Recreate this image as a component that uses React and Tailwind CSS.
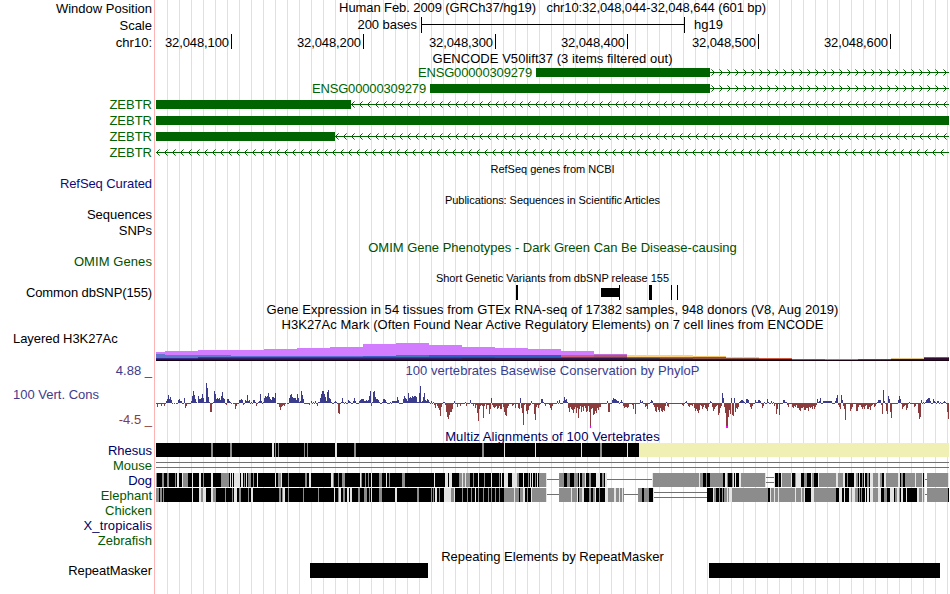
import React from "react";

const GREEN = "#006400";

/* One horizontal strip: right-aligned label on the left, track drawing on the right. */
function Row({ h, label, labelClass = "", children }) {
  return (
    <div className={`flex shrink-0 ${h}`}>
      <div className={`w-[155px] shrink-0 pr-[3px] text-right ${labelClass}`}>{label}</div>
      <div className="flex w-[794px] shrink-0 items-start">{children}</div>
    </div>
  );
}

function Title({ className = "", children }) {
  return <div className={`w-full pl-px text-center whitespace-pre ${className}`}>{children}</div>;
}

/* Intron line with strand arrows every 8 px. */
function Intron({ width, first, dir }) {
  const tips = [];
  for (let x = first; x < width; x += 8) tips.push(x);
  return (
    <svg width={width} height="16" className="block shrink-0" shapeRendering="crispEdges">
      <rect x="0" y="7" width={width} height="1" fill={GREEN} />
      {tips.map((x) => (
        <g key={x} fill={GREEN}>
          <rect x={x + dir} y="6" width="1" height="3" />
          <rect x={x + dir * 2} y="5" width="1" height="1" />
          <rect x={x + dir * 2} y="9" width="1" height="1" />
          <rect x={x + dir * 3} y="4" width="1" height="1" opacity="0.6" />
          <rect x={x + dir * 3} y="10" width="1" height="1" opacity="0.6" />
        </g>
      ))}
    </svg>
  );
}

/* Conservation scores: "position:score"; a score holds up to the next position. */
const PHYLOP = `156:-1 157:-4 158:-1 161:-3 162:-1 164:-3 165:-1 166:2 167:4 168:8 169:4 170:6 171:3 172:-1 173:0 174:-1 175:0 176:-1 178:3 179:4 180:2 181:2 182:-1 184:5 185:-5 186:-3 187:-1 191:2 192:7 193:12 194:8 195:4 196:1 197:0 198:7 199:4 200:4 201:5 202:9 203:5 204:1 206:20 207:15 208:6 209:1 210:-9 212:-1 213:1 214:12 215:9 216:4 217:5 218:4 219:5 220:3 221:7 222:11 223:5 224:4 225:-1 226:-2 227:4 228:4 229:2 230:1 231:-1 232:0 233:-1 235:-6 236:-3 237:-1 239:3 240:3 241:4 242:3 243:-2 244:-1 245:3 246:2 247:8 248:2 249:3 250:-1 251:1 252:-1 253:3 255:1 256:-3 257:-1 258:1 259:2 260:9 261:2 262:-1 263:1 264:5 265:7 266:6 267:7 268:10 269:6 270:4 271:3 272:6 274:5 275:10 276:0 277:-1 279:-4 280:-7 281:-4 282:-3 283:-2 284:-3 285:-1 286:0 287:-1 289:5 290:8 291:9 292:6 293:5 296:3 297:9 298:5 299:1 300:2 301:12 302:8 303:4 304:-1 309:-2 310:0 311:2 312:-1 313:1 314:-1 315:2 316:-1 317:-3 318:1 320:5 321:9 322:12 324:9 325:6 326:2 327:11 328:13 329:5 330:4 331:1 332:-1 334:1 335:2 336:1 337:-1 338:-10 339:-11 340:-1 341:1 342:5 343:1 344:-1 345:1 346:-1 348:3 349:2 350:1 351:-1 353:2 354:5 355:2 356:-1 359:2 360:3 361:4 364:2 366:3 367:2 368:3 369:7 370:12 371:-3 372:1 373:11 374:12 375:6 376:4 378:3 379:1 380:-1 382:1 383:4 385:3 386:1 387:-1 390:1 391:-1 392:2 396:2 397:6 398:3 399:-1 403:4 404:7 405:5 406:4 407:2 408:10 409:5 410:6 411:5 412:7 413:6 414:7 416:6 417:1 419:10 420:17 421:1 422:2 423:6 424:10 425:3 426:2 427:4 428:3 429:1 430:-1 431:2 432:-1 433:1 434:-2 435:-5 436:-1 437:-3 438:-5 439:-7 440:-13 441:-4 442:-1 443:1 445:-2 446:-9 447:-14 448:-16 449:-12 450:-9 452:-6 453:-1 454:2 455:-1 457:-4 458:-1 460:-3 461:-1 465:1 466:-3 467:-1 470:3 471:-1 473:-3 474:-1 475:-5 476:-2 477:-10 478:-18 479:-6 480:-3 481:-2 482:-3 483:-15 484:-3 485:-1 486:-6 487:-2 489:-11 490:-6 491:5 492:-2 493:-4 494:-5 495:-4 496:-3 497:-6 498:-5 499:-3 500:-6 502:-1 503:-4 504:-9 505:-12 506:-13 507:-5 508:-3 509:-1 512:-3 513:-2 514:-1 515:-5 516:-1 518:-5 519:-6 520:5 521:-5 522:-10 523:-22 524:-2 525:-1 526:-8 527:-11 528:-7 529:-3 530:-2 531:2 532:-1 534:-11 535:-17 536:-4 537:-2 538:-5 539:-2 540:-1 541:4 543:1 544:-1 545:-3 546:-1 549:-2 550:-5 551:-7 552:-3 553:-1 557:2 558:-1 559:3 560:-1 563:2 564:6 565:3 566:4 567:1 568:-5 569:-9 570:-4 571:-6 572:-7 573:-10 574:-6 575:-4 576:-10 577:-5 578:-15 579:-6 580:-3 581:-9 582:-4 583:-8 584:-3 585:-5 586:-9 587:-8 588:-3 589:-9 590:-24 591:-6 592:-5 593:-12 594:-11 595:-8 596:-10 597:-5 598:-7 599:-4 601:-1 607:2 608:-9 610:-1 612:3 613:5 614:4 616:3 617:2 619:-1 620:1 621:3 622:1 623:-3 624:-5 625:-4 627:-5 628:-4 629:-1 632:-2 633:-6 634:-1 635:-11 636:-1 640:3 641:1 642:2 643:-1 645:-4 646:-3 647:-6 648:-1 650:1 651:3 652:2 653:-2 654:-4 655:-8 656:-9 657:-4 658:-7 659:-9 660:-5 661:-8 662:-9 663:-7 664:-8 665:-3 666:1 667:-3 668:-4 669:-1 682:-2 683:-3 684:-1 685:1 686:2 687:-1 688:-3 689:-4 690:-2 692:-3 693:-1 694:-5 695:-8 696:-6 697:-8 698:-10 699:-7 700:-2 701:-3 702:-6 703:-4 704:-2 705:-5 706:-6 707:-8 708:-4 709:-1 710:2 711:1 712:-4 713:-8 714:-6 715:-4 716:-3 717:-2 718:-12 719:-10 720:-5 721:-3 722:10 723:5 724:-4 725:-10 726:-24 728:-14 729:-7 730:-11 731:5 732:-12 733:-13 734:5 735:-9 736:-5 737:-6 738:-4 739:1 740:2 741:3 743:2 744:1 745:-1 746:4 748:3 749:-1 750:-4 751:-6 752:-3 753:-1 755:3 756:1 758:3 760:2 761:-1 762:-5 763:-3 764:1 765:-1 767:4 768:1 769:-1 771:2 772:-1 773:1 774:-3 775:-1 776:-11 777:-6 778:-1 779:-12 780:-1 783:3 785:1 787:-2 788:-4 789:-1 792:-4 793:-5 794:-3 795:-4 796:-2 797:-5 799:-7 800:-8 801:-5 803:-4 804:-7 806:-5 808:-8 809:-4 810:-5 811:-4 812:-6 813:-3 814:-6 815:-4 816:-2 817:4 818:1 819:2 820:5 821:-1 823:2 832:-1 835:2 836:5 837:8 838:-2 839:-4 840:-6 841:8 842:3 843:-3 844:-6 845:-17 846:-1 850:-8 851:-6 852:-4 853:-1 856:-8 858:-4 859:-2 861:-4 862:-6 863:-4 864:-6 865:-3 866:-2 867:-6 869:-4 870:-7 871:-3 872:-2 873:-1 874:-4 875:-3 876:-1 877:1 878:3 881:-2 882:-11 883:13 884:2 885:-1 886:-8 887:-11 888:7 889:4 890:-9 891:-15 892:-1 898:3 899:7 900:4 901:-1 902:-6 903:-4 904:-3 905:-2 906:-7 907:-5 908:-1 909:1 910:-1 914:-4 915:-3 916:-1 918:-10 919:-16 920:-14 921:3 922:-1 923:1 924:-1 925:1 926:3 927:4 928:5 930:2 931:-1 933:4 934:2 935:1 936:-1 937:2 939:-1 940:1 941:-1 943:1 944:2 945:1 946:-1 947:-9 948:-16`
  .split(" ")
  .map((s) => s.split(":").map(Number));

function Wiggle() {
  return (
    <svg width="794" height="51" viewBox="155 378 794 51" shapeRendering="crispEdges" className="block">
      {PHYLOP.map(([x, v], i) => {
        const next = i + 1 < PHYLOP.length ? PHYLOP[i + 1][0] : 949;
        return (
          <rect
            key={x}
            x={x}
            y={v > 0 ? 403 - v : 403}
            width={next - x}
            height={Math.abs(v)}
            fill={v > 0 ? "#3c3c8c" : "#8c3c3c"}
          />
        );
      })}
      <rect x="590" y="426" width="1" height="2" fill="#ff00ff" />
      <rect x="726" y="426" width="2" height="2" fill="#ff00ff" />
    </svg>
  );
}

/* Layered histone mark: [x, width, top, height, colour]. */
const LAYERS = [
  [156, 9, 352, 8, "#d27dff"], [165, 33, 351, 9, "#d27dff"], [198, 66, 350, 10, "#d27dff"],
  [264, 33, 349, 11, "#d27dff"], [297, 33, 348, 12, "#d27dff"], [330, 33, 347, 13, "#d27dff"],
  [363, 33, 344, 16, "#d27dff"], [396, 33, 343, 17, "#d27dff"], [429, 33, 345, 15, "#d27dff"],
  [462, 33, 347, 13, "#d27dff"], [495, 33, 348, 12, "#d27dff"], [528, 33, 349, 11, "#d27dff"],
  [561, 33, 351, 9, "#d27dff"], [594, 33, 354, 6, "#c56fd6"],
  [156, 9, 354, 4, "#6377cc"], [165, 33, 355, 3, "#6377cc"], [198, 33, 355, 2, "#6377cc"],
  [231, 132, 356, 1, "#5f6fd0"], [363, 33, 356, 1, "#3f63c4"], [396, 33, 355, 2, "#3f78b8"],
  [429, 132, 355, 2, "#2f5fc0"], [561, 33, 355, 2, "#cc6078"], [594, 33, 355, 2, "#b05c70"],
  [198, 33, 357, 1, "#5a2ea4"], [231, 264, 357, 1, "#3340b4"], [495, 132, 357, 1, "#2a6070"],
  [156, 42, 358, 1, "#3b2b90"], [198, 264, 358, 1, "#30206c"], [462, 165, 358, 1, "#30184c"],
  [627, 66, 355, 2, "#ffd078"], [627, 33, 357, 1, "#58786c"], [660, 33, 357, 1, "#9a6440"],
  [627, 33, 358, 1, "#3a3040"], [660, 33, 358, 1, "#703c38"],
  [693, 33, 356, 1, "#f4c46c"], [693, 33, 357, 2, "#8c5040"],
  [726, 33, 357, 1, "#f4cc70"], [726, 33, 358, 1, "#8c503c"],
  [759, 33, 358, 1, "#d05c40"], [156, 636, 359, 1, "#381030"],
  [792, 33, 359, 1, "#dc2838"], [825, 33, 359, 1, "#f45c34"], [858, 33, 359, 1, "#584820"],
  [891, 33, 358, 1, "#e0c488"], [891, 33, 359, 1, "#341430"],
  [924, 25, 357, 1, "#5454f0"], [924, 25, 358, 2, "#300c30"],
  [156, 793, 360, 1, "#180410"],
];

function Histone() {
  return (
    <svg width="794" height="30" viewBox="155 331 794 30" shapeRendering="crispEdges" className="block">
      {LAYERS.map(([x, w, y, h, c], i) => (
        <rect key={i} x={x} y={y} width={w} height={h} fill={c} />
      ))}
    </svg>
  );
}

/* Alignment identity: start position + shade (k dark, g medium, l light, y unaligned, s/d gap lines). */
const RHESUS = "156k 211g 213k 230g 232k 272l 274k 275g 276k 278g 279k 304g 305k 307g 308k 335l 337k 354g 356k 482g 484k 504l 505k 535l 536k 581l 582k 600g 602k 627l 628k 639y 949";
const DOG = "156g 157k 162g 164k 167g 169k 175g 176k 177l 179k 182l 183g 188k 192l 193k 199l 201k 203g 204k 211l 213k 221g 229k 230l 231k 232l 233k 234l 240k 241l 243k 244g 245k 246l 247k 248g 251k 253g 254k 257l 258k 275l 276k 278g 281l 282k 288g 289k 305g 307k 309l 311k 331l 333g 334k 338g 339k 342g 345k 360l 361g 362k 365g 366k 368g 369k 371l 372k 379g 382k 386l 387k 389g 390k 402g 405k 434l 435k 445l 448k 449l 452k 459g 462l 463g 465l 466g 470k 473g 474k 478l 479k 484g 485k 491l 492k 499g 500k 501l 502k 504l 508k 512l 517g 519k 523l 524k 528g 529k 530l 531k 532l 533k 535g 536k 537l 538k 539g 546l 547s 559g 564k 567g 570k 574g 578k 579l 580k 582g 585l 586k 589g 591k 596l 600k 602g 604k 605l 607s 652l 653g 699l 700g 703k 706g 707k 710g 723k 725l 727g 728k 732g 733l 734k 735l 736k 739l 741g 765l 766d 774l 775k 778g 779k 781l 782g 791l 792k 795g 796l 801k 804g 807k 811l 812g 814k 818l 819g 836l 838g 843l 845k 847g 848k 854l 856g 858k 859l 860k 862g 863k 864l 865k 867g 869k 870l 873g 878l 880g 882k 884l 886g 898l 900k 901g 903k 905g 915l 916g 922l 923k 924l 925s 927g 948l 949";
const ELEPHANT = "156g 159k 160g 162k 163g 164k 192l 193k 199l 201g 203l 206k 211l 213g 216k 225g 226k 232g 233k 234l 237k 239g 241k 248g 249k 251l 253k 279g 281k 282g 283l 285k 288g 289k 303g 304k 318g 319k 334l 335k 338g 339l 341k 343g 345k 347l 349k 350l 352k 358g 360k 364g 367k 369g 370k 371l 372k 379g 382k 395l 397k 417g 419k 431g 432k 433g 434k 435l 437k 439g 440k 444l 451g 454l 455k 462g 463k 467g 468k 471g 472k 475l 476k 478g 479k 483g 484k 488g 489k 491g 492k 495g 496k 499g 500k 504g 514l 515g 519k 520g 523l 525k 527g 528k 531l 532g 546l 547s 559g 571l 572g 577l 578k 579g 582l 584k 589g 591k 593g 595l 596k 599g 600k 605l 607l 608g 614l 616g 619l 620g 622l 623g 624s 638g 642k 644g 649k 653l 654d 707k 713l 714g 716k 719g 720k 722g 723k 724g 727l 728g 729l 732g 768k 770l 771g 774l 775g 778l 779g 795l 796g 801l 802g 804l 805k 811l 814g 836k 839l 842k 844l 845k 849l 851g 852l 855g 858k 859g 860k 861g 862k 865l 866k 867l 869k 870l 873g 878l 881k 884g 887k 890l 894k 895g 897l 899g 900k 901l 903k 906l 907k 917l 919g 922l 923g 924l 925s 927g 948k 949";
const SHADES = { k: "#000000", g: "#8c8c8c", l: "#e4e4e4", y: "#f0f0b4" };

function Alignment({ data }) {
  const runs = data.split(" ").map((s) => [parseInt(s, 10), s.slice(3)]);
  return (
    <svg width="794" height="14" viewBox="155 0 794 14" shapeRendering="crispEdges" className="block">
      {runs.slice(0, -1).map(([x, kind], i) => {
        const w = runs[i + 1][0] - x;
        if (kind === "s") return <rect key={x} x={x} y="6" width={w} height="1" fill="#707070" />;
        if (kind === "d")
          return (
            <g key={x} fill="#707070">
              <rect x={x} y="4" width={w} height="1" />
              <rect x={x} y="9" width={w} height="1" />
            </g>
          );
        return <rect key={x} x={x} y="0" width={w} height="14" fill={SHADES[kind]} />;
      })}
    </svg>
  );
}

const SMALL = "text-[11px] leading-[13px]";
const TICK = "h-[15px] border-r border-black pt-px pr-[2px] text-right tracking-[-0.1px]";

export default function App() {
  return (
    <div className="h-[594px] w-[950px] overflow-hidden bg-white font-['Liberation_Sans',Arial,sans-serif] text-[13px] leading-[15px] text-black">
      <div className="flex h-full w-[949px] flex-col bg-[linear-gradient(to_right,white_154px,#ffb4b4_154px,#ffb4b4_155px,white_155px,white_167px,transparent_167px),repeating-linear-gradient(to_right,transparent_0px,transparent_11px,#dcdcff_11px,#dcdcff_12px)]">
        <Row h="h-[17px]" label="Window Position" labelClass="pt-px">
          <Title className="tracking-[-0.09px]">{"Human Feb. 2009 (GRCh37/hg19)   chr10:32,048,044-32,048,644 (601 bp)"}</Title>
        </Row>
        <Row h="h-[17px]" label="Scale" labelClass="pt-px">
          <div className="w-[266px] pr-[4px] text-right tracking-[-0.05px]">200 bases</div>
          <div className="flex h-[16px] w-[264px] flex-col border-x border-black pt-[7px]">
            <div className="h-px w-full bg-black" />
          </div>
          <div className="pl-[9px]">hg19</div>
        </Row>
        <Row h="h-[17px]" label="chr10:" labelClass="pt-px">
          <div className={`w-[77px] ${TICK}`}>32,048,100</div>
          <div className={`w-[132px] ${TICK}`}>32,048,200</div>
          <div className={`w-[132px] ${TICK}`}>32,048,300</div>
          <div className={`w-[132px] ${TICK}`}>32,048,400</div>
          <div className={`w-[131px] ${TICK}`}>32,048,500</div>
          <div className={`w-[132px] ${TICK}`}>32,048,600</div>
        </Row>
        <Row h="h-[14px]">
          <Title className="tracking-[0.04px]">GENCODE V50lift37 (3 items filtered out)</Title>
        </Row>
        <Row h="h-[16px]">
          <div className="w-[381px] pr-[4px] text-right tracking-[-0.15px] text-[#006400]">ENSG00000309279</div>
          <div className="mt-[3px] h-[9px] w-[174px] bg-[#006400]" />
          <Intron width={239} first={4} dir={-1} />
        </Row>
        <Row h="h-[16px]">
          <div className="w-[275px] pr-[4px] text-right tracking-[-0.15px] text-[#006400]">ENSG00000309279</div>
          <div className="mt-[3px] h-[9px] w-[280px] bg-[#006400]" />
          <Intron width={239} first={4} dir={-1} />
        </Row>
        <Row h="h-[16px]" label="ZEBTR" labelClass="text-[#006400]">
          <div className="mt-[3px] ml-px h-[9px] w-[195px] bg-[#006400]" />
          <Intron width={598} first={0} dir={1} />
        </Row>
        <Row h="h-[16px]" label="ZEBTR" labelClass="text-[#006400]">
          <div className="mt-[3px] ml-px h-[9px] w-[793px] bg-[#006400]" />
        </Row>
        <Row h="h-[16px]" label="ZEBTR" labelClass="text-[#006400]">
          <div className="mt-[3px] ml-px h-[9px] w-[179px] bg-[#006400]" />
          <Intron width={614} first={0} dir={1} />
        </Row>
        <Row h="h-[16px]" label="ZEBTR" labelClass="text-[#006400]">
          <div className="w-px" />
          <Intron width={793} first={0} dir={1} />
        </Row>
        <Row h="h-[15px]">
          <Title className={`pt-[2px] ${SMALL}`}>RefSeq genes from NCBI</Title>
        </Row>
        <Row h="h-[15px]" label="RefSeq Curated" labelClass="tracking-[-0.08px] text-[#0c0c78]" />
        <Row h="h-[16px]">
          <Title className={`pt-[3px] tracking-[-0.06px] ${SMALL}`}>Publications: Sequences in Scientific Articles</Title>
        </Row>
        <Row h="h-[16px]" label="Sequences" />
        <Row h="h-[17px]" label="SNPs" />
        <Row h="h-[14px]">
          <Title className="text-[#005000]">OMIM Gene Phenotypes - Dark Green Can Be Disease-causing</Title>
        </Row>
        <Row h="h-[16px]" label="OMIM Genes" labelClass="tracking-[0.08px] text-[#005000]" />
        <Row h="h-[15px]">
          <Title className={`pt-[2px] ${SMALL}`}>Short Genetic Variants from dbSNP release 155</Title>
        </Row>
        <Row h="h-[17px]" label="Common dbSNP(155)" labelClass="tracking-[-0.11px]">
          <div className="ml-[361px] h-[15px] w-[2px] bg-black" />
          <div className="mt-[3px] ml-[83px] h-[9px] w-[18px] bg-black" />
          <div className="h-[15px] w-px bg-black" />
          <div className="ml-[29px] h-[15px] w-[3px] bg-black" />
          <div className="ml-[19px] h-[15px] w-px bg-black" />
          <div className="ml-[5px] h-[15px] w-px bg-black" />
        </Row>
        <Row h="h-[15px]">
          <Title className="tracking-[0.05px]">Gene Expression in 54 tissues from GTEx RNA-seq of 17382 samples, 948 donors (V8, Aug 2019)</Title>
        </Row>
        <Row h="h-[14px]">
          <Title className="tracking-[0.05px]">H3K27Ac Mark (Often Found Near Active Regulatory Elements) on 7 cell lines from ENCODE</Title>
        </Row>
        <Row h="h-[30px]" label={<div className="pl-[13px] text-left tracking-[-0.06px]">Layered H3K27Ac</div>}>
          <Histone />
        </Row>
        <Row
          h="h-[68px]"
          label={
            <div className="flex flex-col pt-[2px] text-[#3c3c8c]">
              <div>4.88 _</div>
              <div className="pt-[9px] pl-[13px] text-left">100 Vert. Cons</div>
              <div className="pt-[10px] text-[#8c3c3c]">-4.5 _</div>
            </div>
          }
        >
          <div className="flex w-full flex-col">
            <Title className="pt-[2px] tracking-[0.04px] text-[#3c3c8c]">100 vertebrates Basewise Conservation by PhyloP</Title>
            <Wiggle />
          </div>
        </Row>
        <Row h="h-[14px]">
          <Title className="tracking-[0.1px] text-[#000064]">Multiz Alignments of 100 Vertebrates</Title>
        </Row>
        <Row h="h-[15px]" label="Rhesus" labelClass="text-[#000064]">
          <Alignment data={RHESUS} />
        </Row>
        <Row h="h-[15px]" label="Mouse" labelClass="text-[#005a00]">
          <Alignment data="156d 949" />
        </Row>
        <Row h="h-[15px]" label="Dog" labelClass="text-[#000064]">
          <Alignment data={DOG} />
        </Row>
        <Row h="h-[15px]" label="Elephant" labelClass="text-[#005a00]">
          <Alignment data={ELEPHANT} />
        </Row>
        <Row h="h-[15px]" label="Chicken" labelClass="text-[#005a00]" />
        <Row h="h-[15px]" label="X_tropicalis" labelClass="tracking-[0.1px] text-[#000064]" />
        <Row h="h-[15px]" label="Zebrafish" labelClass="text-[#005a00]" />
        <Row h="h-[15px]">
          <Title className="pt-px">Repeating Elements by RepeatMasker</Title>
        </Row>
        <Row h="h-[15px]" label="RepeatMasker" labelClass="tracking-[-0.06px]">
          <div className="ml-[155px] h-[15px] w-[118px] bg-black" />
          <div className="ml-[281px] h-[15px] w-[231px] bg-black" />
        </Row>
      </div>
    </div>
  );
}
